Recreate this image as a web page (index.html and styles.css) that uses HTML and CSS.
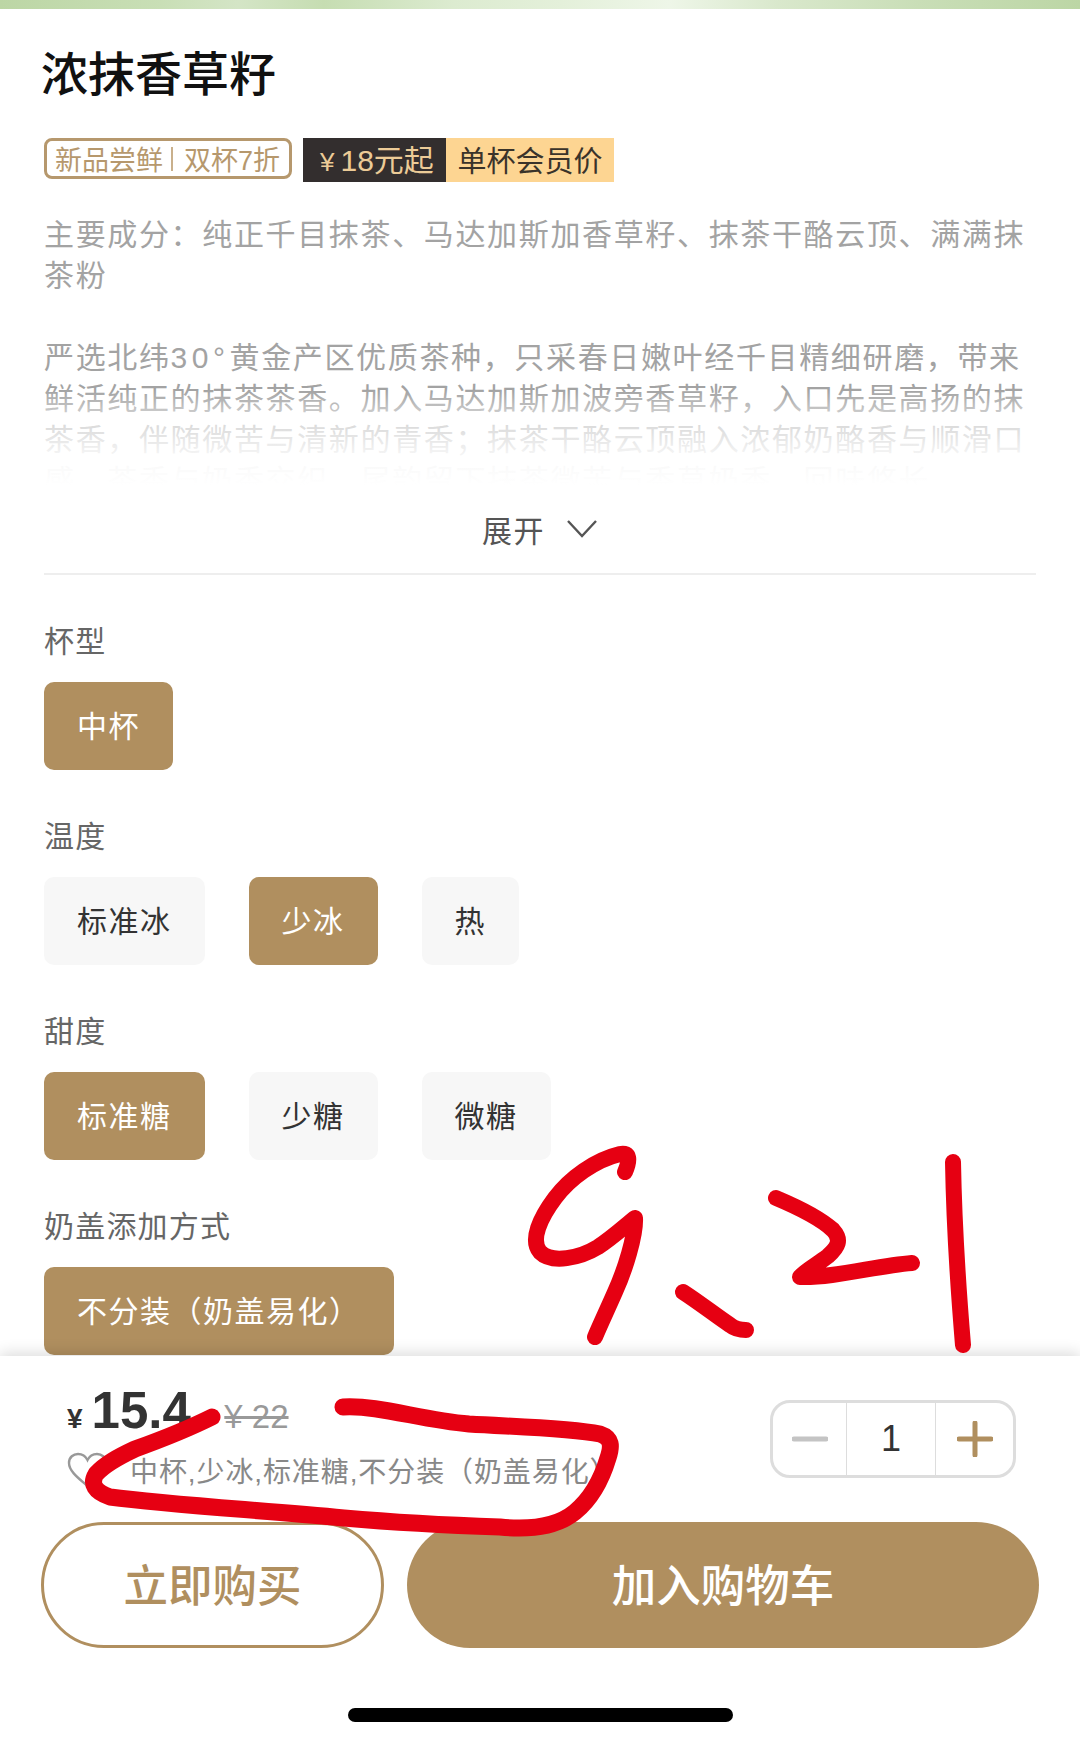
FILE: index.html
```html
<!DOCTYPE html>
<html lang="zh-CN">
<head>
    <meta charset="utf-8">
    <title>浓抹香草籽</title>
    <link rel="stylesheet" href="styles.css">
</head>
<body>
    <div class="page">
        <div class="product">
            <div class="banner"></div>
            <h1 class="title">浓抹香草籽</h1>
            <div class="tags">
                <div class="tag-new">
                    <span>新品尝鲜</span>
                    <i class="tag-line"></i>
                    <span>双杯7折</span>
                </div>
                <div class="tag-price"><span class="tag-yen">¥</span>18元起</div>
                <div class="tag-member">单杯会员价</div>
            </div>
            <div class="desc">
                <p>主要成分&#xFF1A;纯正千目抹茶、马达加斯加香草籽、抹茶干酪云顶、满满抹</p>
                <p>茶粉</p>
                <p>&nbsp;</p>
                <p>严选北纬<span class="desc-num">30°</span>黄金产区优质茶种&#xFF0C;只采春日嫩叶经千目精细研磨&#xFF0C;带来</p>
                <p>鲜活纯正的抹茶茶香。加入马达加斯加波旁香草籽&#xFF0C;入口先是高扬的抹</p>
                <p>茶香&#xFF0C;伴随微苦与清新的青香&#xFF1B;抹茶干酪云顶融入浓郁奶酪香与顺滑口</p>
                <p>感&#xFF0C;茶香与奶香交织&#xFF0C;尾韵留下抹茶微苦与香草奶香&#xFF0C;回味悠长。</p>
            </div>
            <div class="expand">
                <span>展开</span>
                <svg class="chevron" width="32" height="20" viewBox="0 0 32 20">
                    <path d="M2 2 L16 17 L30 2" fill="none" stroke="#555" stroke-width="2.4"/>
                </svg>
            </div>

            <div class="group">
                <div class="group-name">杯型</div>
                <div class="chips">
                    <div class="chip active">中杯</div>
                </div>
            </div>
            <div class="group">
                <div class="group-name">温度</div>
                <div class="chips">
                    <div class="chip">标准冰</div>
                    <div class="chip active">少冰</div>
                    <div class="chip">热</div>
                </div>
            </div>
            <div class="group">
                <div class="group-name">甜度</div>
                <div class="chips">
                    <div class="chip active">标准糖</div>
                    <div class="chip">少糖</div>
                    <div class="chip">微糖</div>
                </div>
            </div>
            <div class="group">
                <div class="group-name">奶盖添加方式</div>
                <div class="chips">
                    <div class="chip active">不分装&#xFF08;奶盖易化&#xFF09;</div>
                </div>
            </div>
        </div>

        <div class="footer">
            <div class="summary">
                <div class="summary-left">
                    <div class="price">
                        <span class="price-unit">¥</span><span class="price-now">15.4</span>
                        <span class="price-old">¥ 22</span>
                    </div>
                    <div class="spec">
                        <svg class="heart" width="41" height="36" viewBox="0 0 41 36">
                            <path d="M20.5 34 C14 28 2 20 2 11 C2 5 6.5 2 11 2 C15 2 18.5 4 20.5 8 C22.5 4 26 2 30 2 C34.5 2 39 5 39 11 C39 20 27 28 20.5 34 Z" fill="none" stroke="#999" stroke-width="2.4"/>
                        </svg>
                        <span>中杯,少冰,标准糖,不分装&#xFF08;奶盖易化&#xFF09;</span>
                    </div>
                </div>
                <div class="qty">
                    <div class="qty-btn">
                        <svg width="36" height="36" viewBox="0 0 36 36">
                            <path d="M2 18 H34" stroke="#c4c4c4" stroke-width="5" stroke-linecap="round"/>
                        </svg>
                    </div>
                    <div class="qty-num">1</div>
                    <div class="qty-btn">
                        <svg width="36" height="36" viewBox="0 0 36 36">
                            <path d="M2 18 H34 M18 2 V34" stroke="#b08f5f" stroke-width="5" stroke-linecap="round"/>
                        </svg>
                    </div>
                </div>
            </div>
            <div class="actions">
                <div class="btn-buy">立即购买</div>
                <div class="btn-cart">加入购物车</div>
            </div>
            <div class="home-bar"></div>
        </div>

        <!-- red marker drawn over the screenshot -->
        <svg class="marker" width="1080" height="1744" viewBox="0 0 1080 1744">
            <g fill="none" stroke="#e60012" stroke-width="16" stroke-linecap="round" stroke-linejoin="round">
                <path d="M625 1172 C630 1160 630 1152 620 1154 C595 1160 570 1178 555 1198 C540 1218 530 1240 540 1252 C552 1264 580 1258 598 1247 C612 1238 625 1226 635 1218 C636 1235 625 1270 615 1292 C608 1308 600 1325 595 1337"/>
                <path d="M683 1292 C700 1303 715 1315 730 1325 C735 1329 740 1330 746 1330"/>
                <path d="M776 1198 C795 1206 820 1218 833 1230 C842 1240 838 1247 828 1256 C818 1264 806 1270 800 1277 C835 1278 875 1266 912 1263"/>
                <path d="M953 1162 C954 1220 958 1285 963 1345"/>
                <path class="marker-loop" d="M343 1407 C380 1405 420 1420 469 1424 C520 1427 570 1428 600 1434 C612 1438 612 1446 608 1458 C602 1478 592 1498 575 1512 C558 1526 530 1530 500 1527 C440 1525 390 1522 344 1518 C260 1510 170 1505 110 1497 C95 1492 90 1484 96 1474 C105 1464 118 1457 135 1449 C160 1440 190 1428 212 1417"/>
            </g>
        </svg>
    </div>
</body>
</html>
```

FILE: styles.css
```css
* {
    box-sizing: border-box;
}

body {
    margin: 0;
    background-color: white;
    font-family: "Liberation Sans", "Noto Sans CJK SC", sans-serif;
    color: #333;
}

.page {
    position: relative;
    width: 1080px;
    height: 1744px;
    overflow: hidden;
}

.product {
    height: 1356px;
    padding: 0 44px;
    overflow: hidden;
}

.banner {
    height: 9px;
    margin: 0 -44px;
    background: linear-gradient(to right, #bcd6a5, #c9dfb6 15%, #d4e5c6 22%, #c6ddb2 30%, #dcebd0 42%, #e4f0da 52%, #eef6e8 62%, #d9e8cc 72%, #c9deb7 85%, #bcd6a5);
}

.title {
    margin: 36px 0 0 -3px;
    font-size: 47px;
    line-height: 60px;
    font-weight: 500;
    color: #111;
}

.tags {
    display: flex;
    align-items: flex-start;
    margin-top: 33px;
}

.tag-new {
    display: flex;
    align-items: center;
    width: 248px;
    height: 41px;
    padding-left: 8px;
    border: 3px solid #b6986d;
    border-radius: 8px;
    font-size: 27px;
    color: #b6986d;
    white-space: nowrap;
}

.tag-line {
    width: 2px;
    height: 24px;
    margin: 0 11px 0 8px;
    background-color: #c9b08c;
}

.tag-price {
    margin-left: 11px;
    width: 143px;
    height: 44px;
    line-height: 46px;
    padding-left: 17px;
    font-size: 30px;
    background-color: #332e2e;
    color: #eccb97;
    white-space: nowrap;
}

.tag-yen {
    margin-right: 6px;
    font-size: 26px;
}

.tag-member {
    width: 168px;
    height: 44px;
    line-height: 48px;
    text-align: center;
    font-size: 29px;
    background-color: #fdd592;
    color: #3a332a;
    white-space: nowrap;
}

.desc {
    position: relative;
    height: 271px;
    margin-top: 32px;
    overflow: hidden;
    font-size: 30px;
    line-height: 41px;
    letter-spacing: 1.65px;
    color: #a3a3a3;
    white-space: nowrap;
}

.desc p {
    margin: 0;
}

.desc-num {
    letter-spacing: 4.5px;
}

.desc::after {
    content: "";
    position: absolute;
    left: 0;
    right: 0;
    bottom: 0;
    height: 95px;
    background: linear-gradient(to bottom, rgba(255, 255, 255, 0), rgba(255, 255, 255, 0.55) 30%, rgba(255, 255, 255, 0.92) 72%, rgba(255, 255, 255, 1));
}

.expand {
    display: flex;
    align-items: center;
    justify-content: center;
    gap: 21px;
    height: 90px;
    border-bottom: 2px solid #eeeeee;
    font-size: 30px;
    letter-spacing: 1.5px;
    color: #555;
}

.group {
    margin-top: 44px;
}

.group-name {
    font-size: 30px;
    line-height: 46px;
    letter-spacing: 1.2px;
    color: #666;
}

.chips {
    display: flex;
    gap: 44px;
    margin-top: 17px;
}

.chip {
    height: 88px;
    padding: 0 33px;
    line-height: 90px;
    border-radius: 10px;
    font-size: 30px;
    letter-spacing: 1.5px;
    background-color: #f7f7f7;
    color: #333;
    white-space: nowrap;
}

.chip.active {
    background-color: #b08f5f;
    color: white;
}

.footer {
    position: relative;
    height: 388px;
    padding: 0 41px;
    background-color: white;
    box-shadow: 0 -3px 14px rgba(0, 0, 0, 0.14);
}

.summary {
    display: flex;
    justify-content: space-between;
    padding: 28px 23px 0 26px;
}

.price {
    height: 56px;
    line-height: 54px;
    white-space: nowrap;
}

.price-unit {
    margin-right: 9px;
    font-size: 28px;
    font-weight: bold;
}

.price-now {
    font-size: 51px;
    font-weight: bold;
}

.price-old {
    margin-left: 29px;
    font-size: 33px;
    color: #999;
    text-decoration: line-through;
}

.spec {
    display: flex;
    align-items: center;
    gap: 22px;
    height: 40px;
    margin-top: 10px;
    font-size: 28px;
    letter-spacing: 0.9px;
    color: #888;
    white-space: nowrap;
}

.qty {
    display: flex;
    width: 246px;
    height: 78px;
    margin-top: 16px;
    border: 3px solid #dddddd;
    border-radius: 20px;
}

.qty-btn {
    display: flex;
    width: 73px;
    align-items: center;
    justify-content: center;
}

.qty-btn:last-child {
    flex: 1;
}

.qty-num {
    width: 90px;
    line-height: 72px;
    text-align: center;
    font-size: 36px;
    border-left: 1px solid #dddddd;
    border-right: 1px solid #dddddd;
}

.actions {
    display: flex;
    gap: 23px;
    margin-top: 32px;
}

.btn-buy,
.btn-cart {
    height: 126px;
    line-height: 129px;
    border-radius: 63px;
    text-align: center;
    font-size: 44.5px;
    font-weight: 500;
}

.btn-buy {
    width: 343px;
    line-height: 123px;
    border: 3px solid #b08f5f;
    color: #b08f5f;
}

.btn-cart {
    width: 632px;
    background-color: #b08f5f;
    color: white;
}

.home-bar {
    width: 385px;
    height: 14px;
    margin: 60px auto 0;
    border-radius: 7px;
    background-color: black;
}

.marker {
    position: absolute;
    top: 0;
    left: 0;
}

.marker-loop {
    stroke-width: 17;
}
```
